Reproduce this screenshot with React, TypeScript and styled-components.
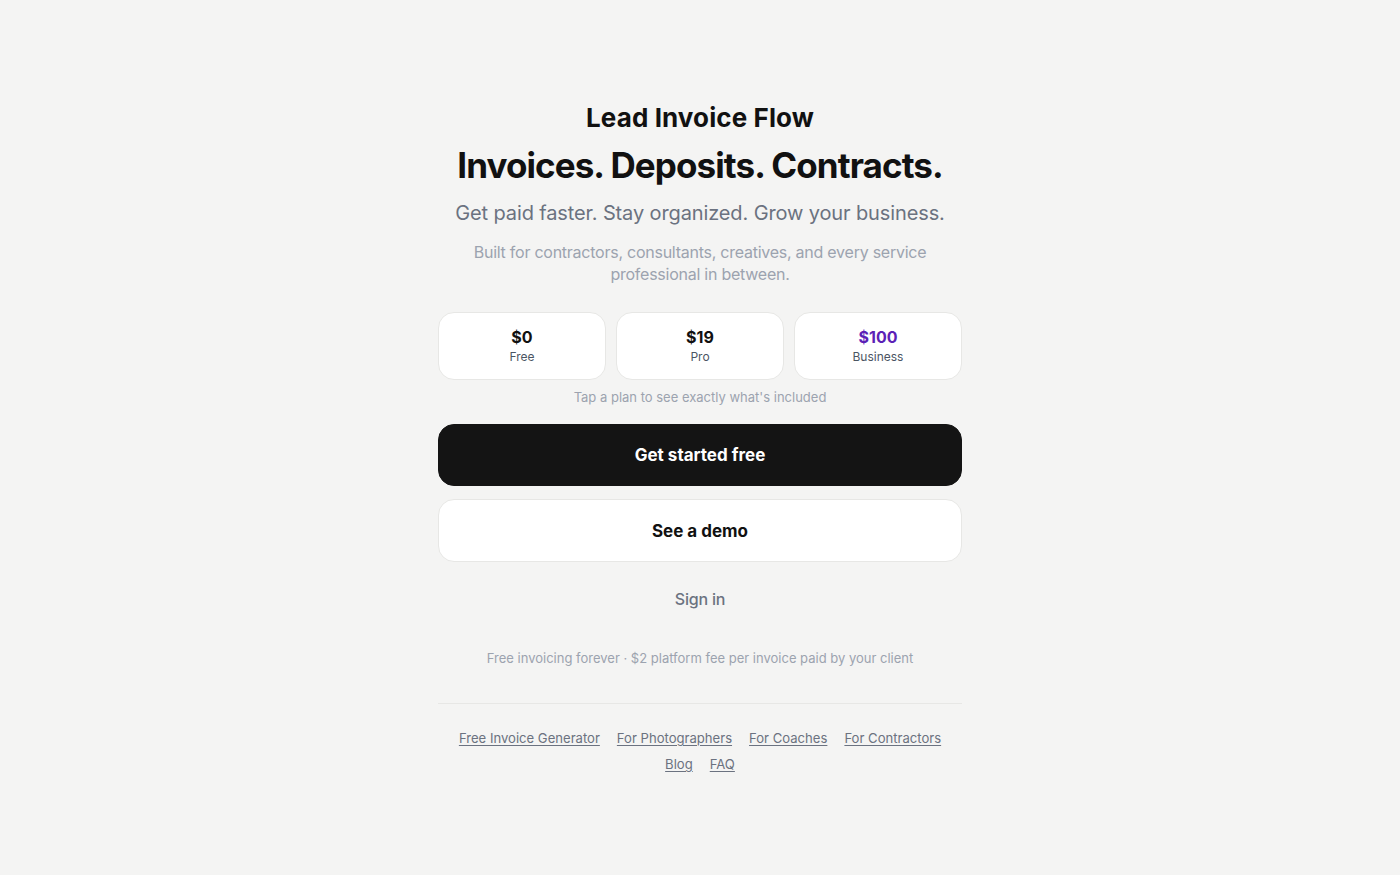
import React from 'react'
import styled, { createGlobalStyle } from 'styled-components'

const GlobalStyle = createGlobalStyle`
  * {
    box-sizing: border-box;
  }

  body {
    margin: 0;
    background: #f4f4f3;
    font-family: Inter, "Noto Sans", "Liberation Sans", sans-serif;
    -webkit-font-smoothing: antialiased;
  }
`;

const Page = styled.main`
  min-height: 875px;
  display: flex;
  justify-content: center;
  padding-top: 102px;
`;

const Column = styled.div`
  width: 524px;
  display: flex;
  flex-direction: column;
  align-items: stretch;
  text-align: center;
`;

const Brand = styled.h2`
  margin: 0;
  font-size: 26px;
  line-height: 32px;
  font-weight: 700;
  color: #111;
  letter-spacing: 0.1px;
`;

const Headline = styled.h1`
  margin: 9px -20px 0;
  font-size: 35px;
  line-height: 44px;
  font-weight: 700;
  color: #111;
  letter-spacing: -0.9px;
`;

const Tagline = styled.p`
  margin: 12px -20px 0;
  font-size: 20px;
  line-height: 28px;
  color: #6b7280;
  letter-spacing: -0.12px;
`;

const Audience = styled.p`
  margin: 14px auto 0;
  max-width: 470px;
  font-size: 16px;
  line-height: 22px;
  color: #9ca3af;
  letter-spacing: -0.25px;
`;

const Plans = styled.div`
  margin-top: 27px;
  display: grid;
  grid-template-columns: repeat(3, 1fr);
  gap: 10px;
`;

const PlanCard = styled.button`
  height: 68px;
  background: #fff;
  border: 1px solid #e7e7e5;
  border-radius: 16px;
  display: flex;
  flex-direction: column;
  align-items: center;
  justify-content: center;
  gap: 2px;
  font-family: inherit;
  cursor: pointer;
`;

const Price = styled.span<{ $accent?: boolean }>`
  font-size: 16px;
  line-height: 20px;
  font-weight: 700;
  color: ${(p) => (p.$accent ? '#5b21b6' : '#111')};
`;

const PlanName = styled.span`
  font-size: 12px;
  line-height: 16px;
  color: #4b5563;
`;

const Hint = styled.p`
  margin: 8px 0 0;
  font-size: 13px;
  line-height: 18px;
  color: #9ca3af;
`;

const Button = styled.button<{ $primary?: boolean }>`
  height: ${(p) => (p.$primary ? '62px' : '63px')};
  margin-top: ${(p) => (p.$primary ? '18px' : '13px')};
  border-radius: 16px;
  font-family: inherit;
  font-size: 17px;
  font-weight: 700;
  cursor: pointer;
  background: ${(p) => (p.$primary ? '#141414' : '#fff')};
  color: ${(p) => (p.$primary ? '#fff' : '#111')};
  border: 1px solid ${(p) => (p.$primary ? '#141414' : '#e7e7e5')};
`;

const SignIn = styled.a`
  margin-top: 25px;
  font-size: 16px;
  line-height: 24px;
  font-weight: 500;
  color: #6b7280;
  text-decoration: none;
  align-self: center;
  letter-spacing: -0.2px;
`;

const Fine = styled.p`
  margin: 38px 0 0;
  font-size: 13px;
  line-height: 18px;
  color: #9ca3af;
`;

const Divider = styled.hr`
  margin: 36px 0 0;
  border: 0;
  border-top: 1px solid #e7e7e5;
`;

const FooterLinks = styled.nav`
  margin-top: 25px;
  padding: 0 18px;
  display: flex;
  flex-wrap: wrap;
  justify-content: center;
  column-gap: 17px;
  row-gap: 7px;
`;

const FooterLink = styled.a`
  font-size: 13.1px;
  line-height: 19px;
  color: #6b7280;
  text-decoration: underline;
  text-underline-offset: 2px;
`;

const plans = [
  { price: '$0', name: 'Free' },
  { price: '$19', name: 'Pro' },
  { price: '$100', name: 'Business', accent: true },
]

const links = [
  'Free Invoice Generator',
  'For Photographers',
  'For Coaches',
  'For Contractors',
  'Blog',
  'FAQ',
]

export default function App() {
  return (
    <>
      <GlobalStyle />
      <Page>
        <Column>
          <Brand>Lead Invoice Flow</Brand>
          <Headline>Invoices. Deposits. Contracts.</Headline>
          <Tagline>Get paid faster. Stay organized. Grow your business.</Tagline>
          <Audience>
            Built for contractors, consultants, creatives, and every service professional in between.
          </Audience>

          <Plans>
            {plans.map((plan) => (
              <PlanCard key={plan.name}>
                <Price $accent={plan.accent}>{plan.price}</Price>
                <PlanName>{plan.name}</PlanName>
              </PlanCard>
            ))}
          </Plans>
          <Hint>Tap a plan to see exactly what's included</Hint>

          <Button $primary>Get started free</Button>
          <Button>See a demo</Button>

          <SignIn href="#">Sign in</SignIn>

          <Fine>Free invoicing forever · $2 platform fee per invoice paid by your client</Fine>

          <Divider />

          <FooterLinks>
            {links.map((label) => (
              <FooterLink key={label} href="#">
                {label}
              </FooterLink>
            ))}
          </FooterLinks>
        </Column>
      </Page>
    </>
  )
}
